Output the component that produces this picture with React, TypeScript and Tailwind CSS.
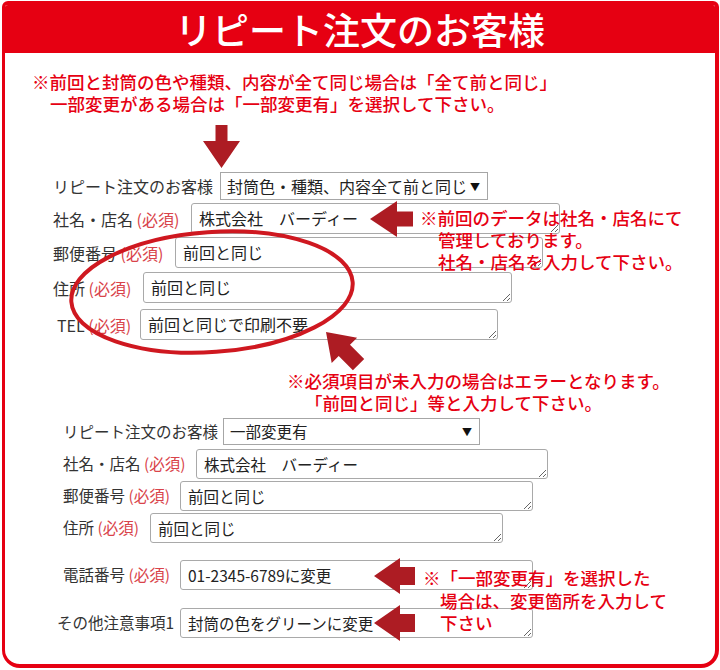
import React from 'react';

type Row = {
    label: string;
    req?: boolean;
    select?: boolean;
    value: string;
    labelCls: string;
    boxCls: string;
    rowCls: string;
};

const jp = "font-['Noto_Sans_CJK_JP',sans-serif]";

const firstRows: Row[] = [
    { label: 'リピート注文のお客様', select: true, value: '封筒色・種類、内容全て前と同じ', labelCls: 'w-[167px]', boxCls: 'w-[268px] h-[28px]', rowCls: 'mt-[4px]' },
    { label: '社名・店名', req: true, value: '株式会社　バーディー', labelCls: 'w-[138px]', boxCls: 'w-[369px] h-[31px]', rowCls: 'mt-[3px]' },
    { label: '郵便番号', req: true, value: '前回と同じ', labelCls: 'w-[122px]', boxCls: 'w-[368px] h-[31px]', rowCls: 'mt-[3px]' },
    { label: '住所', req: true, value: '前回と同じ', labelCls: 'w-[90px]', boxCls: 'w-[369px] h-[31px]', rowCls: 'mt-[4px]' },
    { label: 'TEL', req: true, value: '前回と同じで印刷不要', labelCls: 'w-[83px] ml-[4px]', boxCls: 'w-[358px] h-[31px]', rowCls: 'mt-[6px]' },
];

const secondRows: Row[] = [
    { label: 'リピート注文のお客様', select: true, value: '一部変更有', labelCls: 'w-[160px]', boxCls: 'w-[257px] h-[27px]', rowCls: 'mt-[4px]' },
    { label: '社名・店名', req: true, value: '株式会社　バーディー', labelCls: 'w-[133px]', boxCls: 'w-[352px] h-[30px]', rowCls: 'mt-[4px]' },
    { label: '郵便番号', req: true, value: '前回と同じ', labelCls: 'w-[117px]', boxCls: 'w-[353px] h-[30px]', rowCls: 'mt-[2px]' },
    { label: '住所', req: true, value: '前回と同じ', labelCls: 'w-[87px]', boxCls: 'w-[353px] h-[30px]', rowCls: 'mt-[2px]' },
    { label: '電話番号', req: true, value: '01-2345-6789に変更', labelCls: 'w-[117px]', boxCls: 'w-[353px] h-[30px]', rowCls: 'mt-[17px]' },
    { label: 'その他注意事項1', value: '封筒の色をグリーンに変更', labelCls: 'w-[123px] -ml-[6px]', boxCls: 'w-[353px] h-[30px]', rowCls: 'mt-[18px]' },
];

const FormRows: React.FC<{ rows: Row[]; textCls: string }> = ({ rows, textCls }) => (
    <div className={`flex flex-col ${textCls}`}>
        {rows.map((r) => (
            <div key={r.label + r.value} className={`flex items-center ${r.rowCls}`}>
                <span className={`shrink-0 whitespace-nowrap text-[#333] ${r.labelCls}`}>
                    {r.label}
                    {r.req && <span className="text-[#d9434a]"> (必須)</span>}
                </span>
                {r.select ? (
                    <div className={`flex items-center justify-between border border-[#a6a6a6] bg-white pl-[6px] pr-[7px] text-[#222] ${r.boxCls}`}>
                        <span className="whitespace-nowrap">{r.value}</span>
                        <span className="text-[10px] text-[#111]">▼</span>
                    </div>
                ) : (
                    <textarea
                        readOnly
                        rows={1}
                        defaultValue={r.value}
                        className={`block overflow-hidden rounded-[3px] border border-[#a9a9a9] bg-white px-[7px] py-[3px] leading-[22px] text-[#222] outline-none ${r.boxCls}`}
                    />
                )}
            </div>
        ))}
    </div>
);

export default function App() {
    return (
        <div className={`relative h-[670px] w-[720px] overflow-hidden bg-white ${jp}`}>
            <div className="ml-[2px] mt-[1px] box-border h-[667px] w-[717px] overflow-hidden rounded-t-[6px] rounded-b-[18px] border-[4px] border-l-[3px] border-[#e60012] bg-white">
                <div className="flex h-[48px] items-center justify-center bg-[#e60012]">
                    <h1 className="text-[37px] font-medium leading-none text-white">リピート注文のお客様</h1>
                </div>

                <div className="mt-[18px] whitespace-nowrap text-[17.5px] font-medium leading-[22px] text-[#e60012]">
                    <p className="pl-[27px]">※前回と封筒の色や種類、内容が全て同じ場合は「全て前と同じ」</p>
                    <p className="pl-[45px]">一部変更がある場合は「一部変更有」を選択して下さい。</p>
                </div>

                <div className="mt-[10px] pl-[198px]">
                    <svg width="37" height="43" viewBox="0 0 37 43" className="block">
                        <polygon points="12.5,0 24.5,0 24.5,16 37,16 18.5,43 0,16 12.5,16" fill="#ad1c23" />
                    </svg>
                </div>

                <div className="pl-[48px]">
                    <FormRows rows={firstRows} textCls="text-[16px]" />
                </div>

                <div className="mt-[30px] whitespace-nowrap text-[17.5px] font-medium leading-[22px] text-[#e60012]">
                    <p className="pl-[282px]">※必須項目が未入力の場合はエラーとなります。</p>
                    <p className="pl-[300px]">「前回と同じ」等と入力して下さい。</p>
                </div>

                <div className="pl-[58px]">
                    <FormRows rows={secondRows} textCls="text-[15.5px]" />
                </div>
            </div>

            {/* annotations drawn over the form */}
            <svg className="pointer-events-none absolute left-0 top-0" width="720" height="670" viewBox="0 0 720 670">
                <ellipse cx="212" cy="292" rx="141" ry="60" fill="none" stroke="#cf1820" strokeWidth="4" transform="rotate(-4 212 292)" />
                <polygon points="370,219 397,201 397,211.5 413,211.5 413,226.5 397,226.5 397,237" fill="#ad1c23" />
                <polygon points="326,332 357.1,337.7 350,344.7 364.2,358.9 352.9,370.2 338.7,356 331.7,363.1" fill="#ad1c23" />
                <polygon points="374,576 400,558 400,567 415,567 415,585 400,585 400,594" fill="#ad1c23" />
                <polygon points="374,623 400,605 400,614 415,614 415,632 400,632 400,641" fill="#ad1c23" />
            </svg>

            <div className="absolute left-[420px] top-[207px] whitespace-nowrap text-[17.5px] font-medium leading-[22px] text-[#e60012]">
                <p>※前回のデータは社名・店名にて</p>
                <p className="pl-[18px]">管理しております。</p>
                <p className="pl-[18px]">社名・店名を入力して下さい。</p>
            </div>

            <div className="absolute left-[423px] top-[567px] whitespace-nowrap text-[17.5px] font-medium leading-[22.5px] text-[#e60012]">
                <p>※「一部変更有」を選択した</p>
                <p className="pl-[17px]">場合は、変更箇所を入力して</p>
                <p className="pl-[17px]">下さい</p>
            </div>
        </div>
    );
}
